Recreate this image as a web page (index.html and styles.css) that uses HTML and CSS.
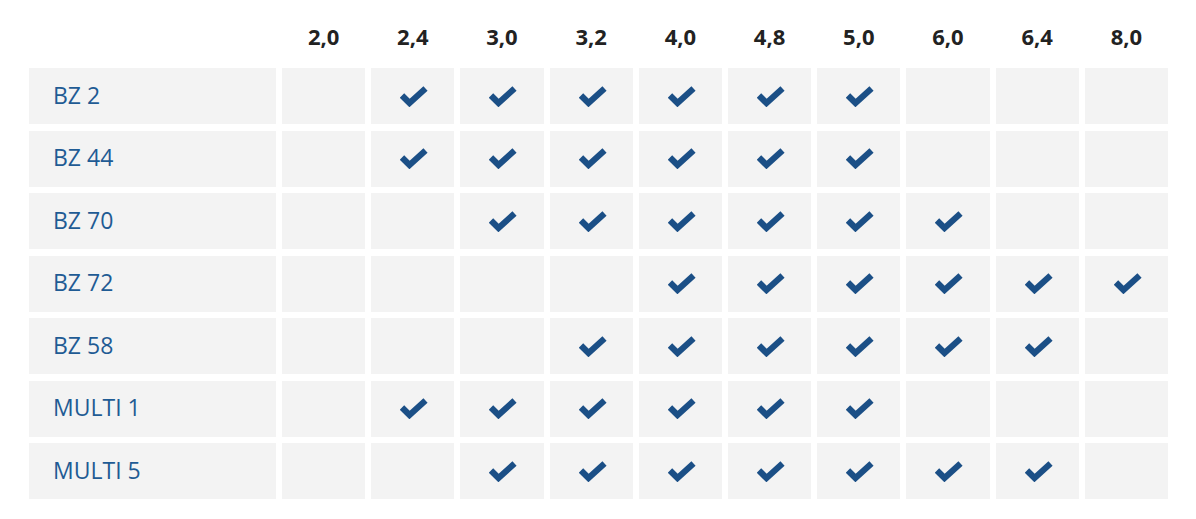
FILE: index.html
```html
<!DOCTYPE html>
<html>
<head>
<meta charset="utf-8">
<link rel="stylesheet" href="styles.css">
</head>
<body>
<div class="table" id="t">
  <div class="head"></div>
  <div class="head">2,0</div>
  <div class="head">2,4</div>
  <div class="head">3,0</div>
  <div class="head">3,2</div>
  <div class="head">4,0</div>
  <div class="head">4,8</div>
  <div class="head">5,0</div>
  <div class="head">6,0</div>
  <div class="head">6,4</div>
  <div class="head">8,0</div>
</div>
<script src="script.js"></script>
</body>
</html>
```
FILE: styles.css
```css
html, body {
  margin: 0;
  padding: 0;
  background: #ffffff;
}
body {
  font-family: "Open Sans", "Liberation Sans", sans-serif;
}
.table {
  display: grid;
  grid-template-columns: 247px repeat(10, 1fr);
  grid-auto-rows: 56px;
  grid-template-rows: 61.5px;
  column-gap: 6px;
  row-gap: 6.5px;
  width: 1139px;
  margin-left: 29px;
}
.head {
  font-weight: 700;
  font-size: 22px;
  line-height: 28px;
  color: #222222;
  text-align: center;
  padding-top: 22px;
}
.label {
  background: #f3f3f3;
  color: #1f5b94;
  font-size: 23px;
  display: flex;
  align-items: center;
  padding-left: 24px;
  padding-bottom: 3px;
}
.cell {
  background: #f3f3f3;
  display: flex;
  align-items: center;
  justify-content: center;
}
.check {
  width: 28px;
  height: 21px;
  margin-left: 3px;
}
.check polyline {
  fill: none;
  stroke: #1b4f86;
  stroke-width: 6.2;
  stroke-linejoin: miter;
  stroke-linecap: butt;
}
```
FILE: script.js
```js
const rows = [
  ["BZ 2", [2,3,4,5,6,7]],
  ["BZ 44", [2,3,4,5,6,7]],
  ["BZ 70", [3,4,5,6,7,8]],
  ["BZ 72", [5,6,7,8,9,10]],
  ["BZ 58", [4,5,6,7,8,9]],
  ["MULTI 1", [2,3,4,5,6,7]],
  ["MULTI 5", [3,4,5,6,7,8,9]]
];
const t = document.getElementById("t");
const svg = '<svg class="check" viewBox="0 0 28 21"><polyline points="2,9.5 9.5,17 25.5,2.5"/></svg>';
for (const [name, cols] of rows) {
  const l = document.createElement("div");
  l.className = "label";
  l.textContent = name;
  t.appendChild(l);
  for (let i = 1; i <= 10; i++) {
    const c = document.createElement("div");
    c.className = "cell";
    if (cols.includes(i)) c.innerHTML = svg;
    t.appendChild(c);
  }
}
```
